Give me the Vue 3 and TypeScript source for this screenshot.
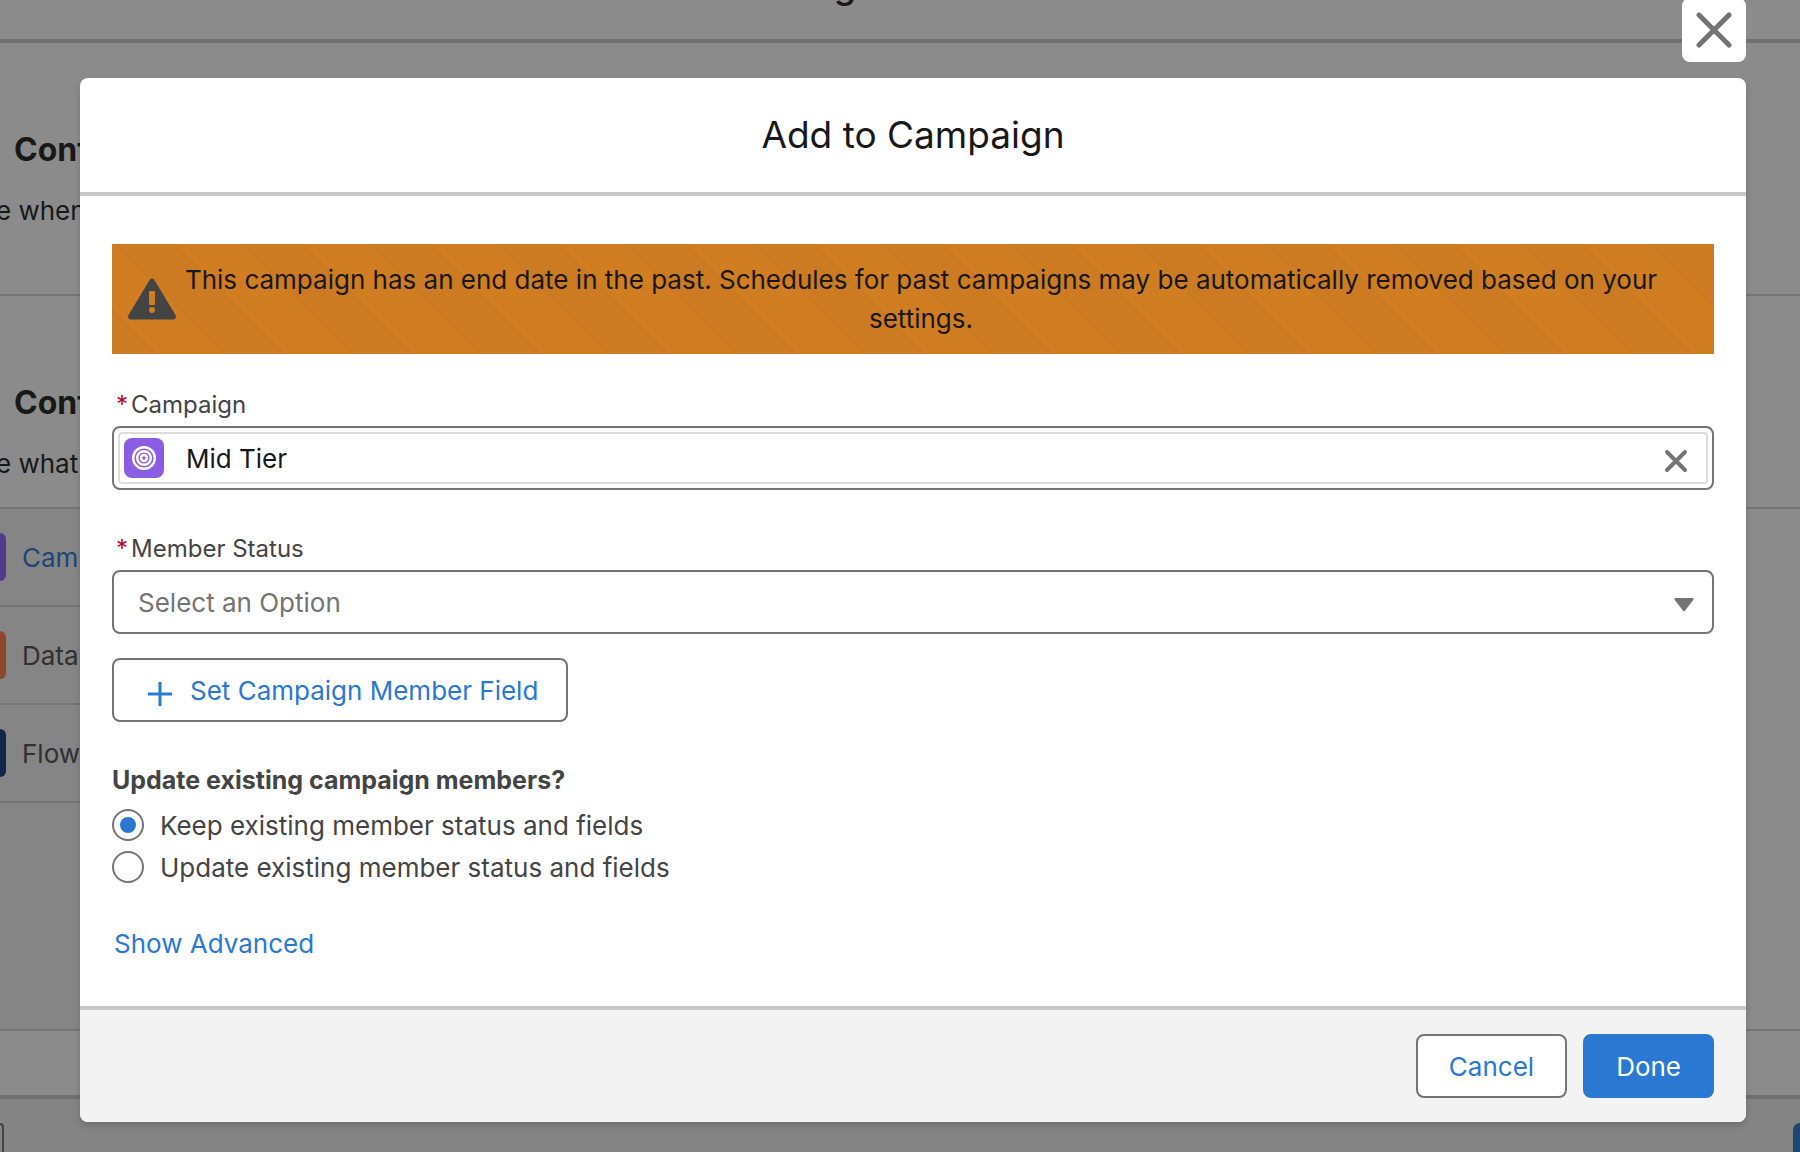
<script setup lang="ts">
import { ref } from 'vue'

interface Resource {
  label: string
  tone: 'purple' | 'orange' | 'navy'
  link?: boolean
}

const resources: Resource[] = [
  { label: 'Camp', tone: 'purple', link: true },
  { label: 'Data', tone: 'orange' },
  { label: 'Flow', tone: 'navy' },
]

const campaign = ref('Mid Tier')
const memberStatus = ref('')
const updateMode = ref('keep')

const updateOptions = [
  { value: 'keep', label: 'Keep existing member status and fields' },
  { value: 'update', label: 'Update existing member status and fields' },
]
</script>

<template>
  <div class="page">
    <div class="under" aria-hidden="true">
      <div class="under-header"><span class="under-title">g</span></div>
      <section class="under-section first">
        <h3>Conf</h3>
        <p>e when</p>
      </section>
      <section class="under-section second">
        <h3>Conf</h3>
        <p>e what</p>
      </section>
      <div class="under-list">
        <div v-for="item in resources" :key="item.label" class="under-row">
          <span class="tile" :class="item.tone"></span>
          <span :class="{ 'under-link': item.link }">{{ item.label }}</span>
        </div>
      </div>
      <div class="under-bar"></div>
      <div class="under-footer">
        <span class="under-cancel"></span>
        <span class="under-done"></span>
      </div>
    </div>

    <div class="modal-wrap">
      <section class="modal" role="dialog" aria-labelledby="modal-title">
        <button class="close" type="button" aria-label="Close">
          <svg viewBox="0 0 36 36" width="36" height="36">
            <path d="M3 3 33 33M33 3 3 33" />
          </svg>
        </button>
        <header class="modal-header">
          <h2 id="modal-title">Add to Campaign</h2>
        </header>

        <div class="modal-body">
          <div class="alert" role="alert">
            <svg class="warning" viewBox="0 0 48 42" width="48" height="42">
              <path
                fill-rule="evenodd"
                d="M26.400 2 47.500 37c1.200 2.200 0 4.500-2.300 4.500H2.800C.5 41.500-.700 39.200.500 37L21.600 2c1.200-2 3.600-2 4.800 0ZM21 14v12a1 1 0 0 0 1 1h4a1 1 0 0 0 1-1V14a1 1 0 0 0-1-1h-4a1 1 0 0 0-1 1Zm3 15a3 3 0 1 0 0 6 3 3 0 0 0 0-6Z"
              />
            </svg>
            <p>
              This campaign has an end date in the past. Schedules for past campaigns may be
              automatically removed based on your settings.
            </p>
          </div>

          <div class="field">
            <label for="campaign"><abbr>*</abbr>Campaign</label>
            <div class="lookup">
              <div class="pill">
                <svg class="campaign-icon" viewBox="0 0 40 40" width="40" height="40">
                  <rect width="40" height="40" rx="8" />
                  <circle cx="20" cy="20" r="10.800" />
                  <circle cx="20" cy="20" r="6.800" />
                  <circle cx="20" cy="20" r="3" />
                </svg>
                <input id="campaign" v-model="campaign" type="text" readonly />
                <button class="clear" type="button" aria-label="Clear selection">
                  <svg viewBox="0 0 24 24" width="24" height="24">
                    <path d="M3 3 21 21M21 3 3 21" />
                  </svg>
                </button>
              </div>
            </div>
          </div>

          <div class="field status">
            <label for="status"><abbr>*</abbr>Member Status</label>
            <div class="select">
              <select id="status" v-model="memberStatus">
                <option value="">Select an Option</option>
              </select>
              <svg class="arrow" viewBox="0 0 20 14" width="20" height="14">
                <path d="M1 0h18q1 .5.500 1.500L11 12.800q-1 1-2 0L.5 1.500Q0 .5 1 0Z" />
              </svg>
            </div>
          </div>

          <button class="btn add" type="button">
            <svg viewBox="0 0 24 24" width="24" height="24">
              <path d="M12 1v22M1 12h22" />
            </svg>
            Set Campaign Member Field
          </button>

          <fieldset>
            <legend>Update existing campaign members?</legend>
            <label v-for="option in updateOptions" :key="option.value" class="radio">
              <input v-model="updateMode" type="radio" name="update-mode" :value="option.value" />
              {{ option.label }}
            </label>
          </fieldset>

          <a class="advanced" href="#">Show Advanced</a>
        </div>

        <footer class="modal-footer">
          <button class="btn" type="button">Cancel</button>
          <button class="btn brand" type="button">Done</button>
        </footer>
      </section>
    </div>
  </div>
</template>

<style>
body {
  margin: 0;
}
</style>

<style scoped>
* {
  box-sizing: border-box;
}

.page {
  position: relative;
  min-height: 100vh;
  overflow: hidden;
  background: #8b8b8b;
  color: #181818;
  font-family: Inter, 'Liberation Sans', sans-serif;
  font-size: 26px;
  line-height: 39px;
}

h2,
h3,
p {
  margin: 0;
  font-weight: 400;
}

button,
input,
select {
  margin: 0;
  font: inherit;
}

/* dimmed page behind the dialog */
.under {
  position: absolute;
  inset: 0;
  display: flex;
  flex-direction: column;
  white-space: nowrap;
}

.under-header {
  height: 43px;
  border-bottom: 4px solid #707070;
  text-align: center;
}

.under-title {
  display: block;
  margin: -34px 110px 0 0;
  font-size: 36px;
  font-weight: 500;
}

.under-section {
  border-bottom: 2px solid #747474;
}

.under-section h3 {
  padding-left: 14px;
  font-size: 32px;
  font-weight: 700;
  line-height: 42px;
}

.under-section p {
  margin: 20px 0 0 -4px;
}

.first {
  height: 253px;
  padding-top: 86px;
}

.second {
  height: 213px;
  padding-top: 86px;
}

.under-list {
  flex: 1;
  width: 50%;
  background: #858585;
}

.under-row {
  display: flex;
  align-items: center;
  gap: 16px;
  height: 98px;
  border-bottom: 2px solid #747474;
  color: #303030;
}

.tile {
  width: 6px;
  height: 48px;
  border-radius: 0 8px 8px 0;
}

.purple {
  background: #523a86;
}

.orange {
  background: #8e472d;
}

.navy {
  background: #12254a;
}

.under-link {
  color: #1d4577;
}

.under-bar {
  height: 70px;
  border-top: 2px solid #747474;
  border-bottom: 4px solid #707070;
}

.under-footer {
  display: flex;
  justify-content: space-between;
  height: 53px;
  padding-top: 24px;
  background: #848484;
}

.under-cancel {
  width: 4px;
  border: solid #444;
  border-width: 2px 2px 0 0;
  border-radius: 0 8px 0 0;
}

.under-done {
  width: 7px;
  background: #1f4673;
  border-radius: 8px 0 0 0;
}

/* dialog */
.modal-wrap {
  position: relative;
  padding: 78px 54px 30px 80px;
}

.modal {
  position: relative;
  border-radius: 8px;
  background: #fff;
  box-shadow: 0 4px 6px rgba(0, 0, 0, 0.16);
}

.close {
  position: absolute;
  top: -80px;
  right: 0;
  display: grid;
  place-items: center;
  width: 64px;
  height: 64px;
  padding: 0;
  border: 0;
  border-radius: 8px;
  background: #fff;
}

.close path,
.clear path {
  fill: none;
  stroke: #747474;
  stroke-linecap: round;
  stroke-width: 4;
}

.close path {
  stroke-width: 5;
}

.modal-header {
  padding: 32px;
  border-bottom: 4px solid #c9c9c9;
  text-align: center;
}

.modal-header h2 {
  font-size: 37px;
  line-height: 50px;
}

.modal-body {
  padding: 48px 32px 43px;
}

.alert {
  display: flex;
  align-items: center;
  padding: 16px 48px 16px 16px;
  background-color: #d17e23;
  background-image: linear-gradient(
    45deg,
    rgba(0, 0, 0, 0.025) 25%,
    transparent 25%,
    transparent 50%,
    rgba(0, 0, 0, 0.025) 50%,
    rgba(0, 0, 0, 0.025) 75%,
    transparent 75%
  );
  background-size: 128px 128px;
  text-align: center;
}

.alert p {
  flex: 1;
}

.warning {
  flex: none;
  fill: #444;
}

.field {
  margin-top: 32px;
}

.status {
  margin-top: 40px;
}

.field label {
  display: block;
  padding-left: 4px;
  margin-bottom: 2px;
  color: #444;
  font-size: 24px;
  line-height: 38px;
}

abbr {
  margin-right: 3px;
  color: #ba0517;
}

.lookup {
  padding: 4px;
  border: 2px solid #747474;
  border-radius: 8px;
}

.pill {
  display: flex;
  align-items: center;
  height: 52px;
  padding: 0 14px 0 4px;
  border: 2px solid #ddd;
  border-radius: 4px;
}

.campaign-icon {
  flex: none;
  fill: none;
  stroke: #fff;
  stroke-width: 2.4;
}

.campaign-icon rect {
  fill: #8a5de4;
  stroke: none;
}

.pill input {
  flex: 1;
  min-width: 0;
  padding: 0 0 0 22px;
  border: 0;
  outline: 0;
  background: none;
  color: #181818;
}

.clear {
  display: grid;
  padding: 6px 4px 0;
  border: 0;
  background: none;
}

.select {
  position: relative;
}

.select select {
  display: block;
  width: 100%;
  height: 64px;
  padding: 0 24px;
  border: 2px solid #747474;
  border-radius: 8px;
  appearance: none;
  background: #fff;
  color: #747474;
}

.arrow {
  position: absolute;
  top: 28px;
  right: 20px;
  fill: #747474;
}

.btn {
  display: inline-flex;
  align-items: center;
  justify-content: center;
  height: 64px;
  padding: 0 31px;
  border: 2px solid #747474;
  border-radius: 8px;
  background: #fff;
  color: #2a78d1;
}

.add {
  display: flex;
  gap: 18px;
  padding: 0 28px 0 34px;
  margin-top: 24px;
}

.add svg {
  margin-top: 8px;
  fill: none;
  stroke: #2a78d1;
  stroke-linecap: round;
  stroke-width: 3;
}

fieldset {
  margin: 39px 0 0;
  padding: 0;
  border: 0;
  color: #444;
}

legend {
  padding: 0;
  margin-bottom: 4px;
  font-size: 25px;
  font-weight: 700;
}

.radio {
  display: flex;
  align-items: center;
  gap: 16px;
  height: 42px;
}

.radio input {
  display: grid;
  place-items: center;
  width: 32px;
  height: 32px;
  border: 2px solid #747474;
  border-radius: 50%;
  appearance: none;
  background: #fff;
}

.radio input:checked::before {
  width: 16px;
  height: 16px;
  border-radius: 50%;
  background: #2a78d1;
  content: '';
}

.advanced {
  display: inline-block;
  margin: 36px 0 0 2px;
  color: #2a78d1;
  text-decoration: none;
}

.modal-footer {
  display: flex;
  justify-content: flex-end;
  gap: 16px;
  padding: 24px 32px;
  border-top: 4px solid #c9c9c9;
  border-radius: 0 0 8px 8px;
  background: #f3f3f3;
}

.brand {
  border-color: #2a78d1;
  background: #2a78d1;
  color: #fff;
}
</style>
